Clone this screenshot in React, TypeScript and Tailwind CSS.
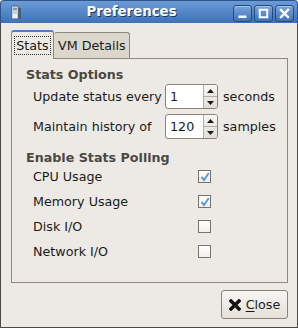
import React from 'react';

const FONT = { fontFamily: '"DejaVu Sans", Verdana, sans-serif' };

function TitleButton({ kind }: { kind: 'min' | 'max' | 'close' }) {
  return (
    <div className="w-[19px] h-[17px] rounded-[3px] border border-[#264a7c] bg-gradient-to-b from-[#7aa6dc] to-[#3f73b6] flex items-center justify-center shadow-[inset_0_1px_0_rgba(255,255,255,0.35)]">
      <svg width="11" height="11" viewBox="0 0 11 11">
        {kind === 'min' && <rect x="1.5" y="7.5" width="8" height="2.5" fill="#fff" />}
        {kind === 'max' && (
          <rect x="1.75" y="1.75" width="7.5" height="7.5" fill="none" stroke="#fff" strokeWidth="2" />
        )}
        {kind === 'close' && (
          <path d="M2 2 L9 9 M9 2 L2 9" stroke="#fff" strokeWidth="2.4" strokeLinecap="square" />
        )}
      </svg>
    </div>
  );
}

function SpinBox({ value }: { value: string }) {
  return (
    <div className="flex w-[53px] h-[25px] rounded-[3px] border border-[#8a8478] bg-white overflow-hidden">
      <div className="flex-1 flex items-center pl-[4px] text-[#1a1a1a]">{value}</div>
      <div className="w-[14px] flex flex-col border-l border-[#b4aea2] bg-gradient-to-b from-[#f8f7f5] to-[#e2ded6]">
        <div className="flex-1 flex items-center justify-center border-b border-[#b4aea2]">
          <svg width="7" height="4" viewBox="0 0 7 4"><path d="M0 4 L3.5 0 L7 4 Z" fill="#1a1a1a" /></svg>
        </div>
        <div className="flex-1 flex items-center justify-center">
          <svg width="7" height="4" viewBox="0 0 7 4"><path d="M0 0 L3.5 4 L7 0 Z" fill="#1a1a1a" /></svg>
        </div>
      </div>
    </div>
  );
}

function Check({ checked }: { checked: boolean }) {
  return (
    <div className="w-[13px] h-[13px] border border-[#7a7466] bg-gradient-to-b from-[#ffffff] to-[#f1efeb] flex items-center justify-center">
      {checked && (
        <svg width="10" height="10" viewBox="0 0 10 10">
          <path d="M1.5 5 L4 8 L8.8 1" fill="none" stroke="#5b9be0" strokeWidth="2" />
        </svg>
      )}
    </div>
  );
}

const polling = [
  { label: 'CPU Usage', checked: true },
  { label: 'Memory Usage', checked: true },
  { label: 'Disk I/O', checked: false },
  { label: 'Network I/O', checked: false },
];

export default function App() {
  return (
    <div className="w-[298px] h-[328px] flex flex-col text-[12.7px] text-[#1a1a1a] whitespace-nowrap" style={FONT}>
      {/* Title bar */}
      <div className="h-[23px] flex items-center rounded-t-[4px] border border-b-0 border-[#2e548a] bg-gradient-to-b from-[#6b9cd8] to-[#3e72b6] pl-[9px] pr-[3px]">
        <svg width="12" height="16" viewBox="0 0 12 16" className="mt-[1px]">
          <rect x="1.5" y="1" width="7" height="13" rx="1" fill="#c7d1dd" stroke="#5d6b7c" />
          <rect x="3" y="3" width="4" height="2" fill="#8796a8" />
          <rect x="3" y="9" width="4" height="4" fill="#eef2f6" />
          <rect x="8.5" y="3" width="2.5" height="11" fill="#44607f" />
        </svg>
        <div className="flex-1 text-center font-bold text-white text-[13.33px] [text-shadow:1px_1px_0_#1c3a66] pl-[8px]">
          Preferences
        </div>
        <div className="flex gap-[2px] mt-[2px]">
          <TitleButton kind="min" />
          <TitleButton kind="max" />
          <TitleButton kind="close" />
        </div>
      </div>

      {/* Body */}
      <div className="flex-1 flex flex-col bg-[#edeae5] border border-t-0 border-[#4d4a44] pl-[10px] pr-[9px]">
        {/* Tabs */}
        <div className="flex items-end h-[35px] pt-[7px]">
          <div className="relative z-10 h-[29px] mb-[-1px] w-[43px] rounded-t-[3px] border border-b-0 border-[#8f897d] border-t-[2px] border-t-[#4a80c4] bg-[#edeae5] flex items-center justify-center">
            <span className="px-[1px] leading-[17px] outline outline-1 outline-dotted outline-[#333]">Stats</span>
          </div>
          <div className="h-[26px] w-[76px] rounded-t-[3px] border border-l-0 border-b-0 border-[#8f897d] bg-[#dcd7cd] flex items-center pl-[4px] pt-[1px]">
            VM Details
          </div>
        </div>

        {/* Panel */}
        <div className="h-[225px] border border-[#8f897d] pt-[8px] pl-[14px]">
          <div className="font-bold text-[#4a4843] leading-[16px]">Stats Options</div>
          <div className="mt-[1px] pl-[7px] flex flex-col gap-[5px]">
            <div className="flex items-center h-[25px]">
              <span className="w-[132px]">Update status every</span>
              <SpinBox value="1" />
              <span className="ml-[5px]">seconds</span>
            </div>
            <div className="flex items-center h-[25px]">
              <span className="w-[132px]">Maintain history of</span>
              <SpinBox value="120" />
              <span className="ml-[5px]">samples</span>
            </div>
          </div>
          <div className="mt-[11px] font-bold text-[#4a4843] leading-[16px]">Enable Stats Polling</div>
          <div className="mt-[-2px] pl-[7px] flex flex-col">
            {polling.map((p) => (
              <div key={p.label} className="flex items-center h-[25px]">
                <span className="w-[165px]">{p.label}</span>
                <Check checked={p.checked} />
              </div>
            ))}
          </div>
        </div>

        {/* Buttons */}
        <div className="flex justify-end mt-[7px]">
          <button className="h-[29px] w-[67px] rounded-[3px] border border-[#8a8478] bg-gradient-to-b from-[#f7f6f3] to-[#e4e0d9] flex items-center justify-center gap-[5px]">
            <svg width="12" height="12" viewBox="0 0 12 12">
              <path d="M2 2 L10 10 M10 2 L2 10" stroke="#111" strokeWidth="3.4" strokeLinecap="square" />
            </svg>
            <span>
              <span className="underline underline-offset-2">C</span>lose
            </span>
          </button>
        </div>
      </div>
    </div>
  );
}
